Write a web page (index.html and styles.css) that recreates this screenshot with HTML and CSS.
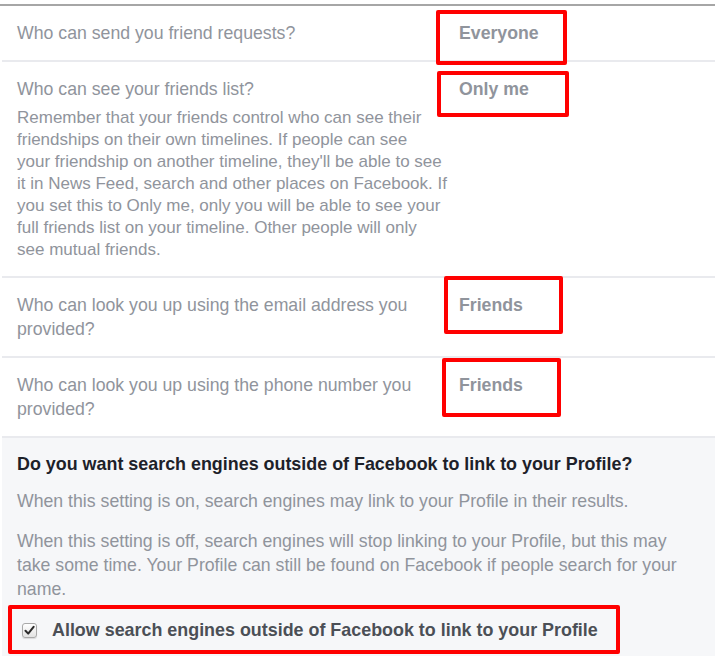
FILE: index.html
```html
<!DOCTYPE html>
<html lang="en">
<head>
    <meta charset="UTF-8">
    <title>Privacy settings</title>
    <link rel="stylesheet" href="styles.css">
</head>
<body>
    <div class="panel">
        <ul class="settings">
            <li class="row">
                <div class="question">Who can send you friend requests?</div>
                <div class="value">Everyone<span class="mark mark-1"></span></div>
            </li>
            <li class="row">
                <div class="question">
                    Who can see your friends list?
                    <p class="hint">Remember that your friends control who can see their<br>
                    friendships on their own timelines. If people can see<br>
                    your friendship on another timeline, they'll be able to see<br>
                    it in News Feed, search and other places on Facebook. If<br>
                    you set this to Only me, only you will be able to see your<br>
                    full friends list on your timeline. Other people will only<br>
                    see mutual friends.</p>
                </div>
                <div class="value">Only me<span class="mark mark-2"></span></div>
            </li>
            <li class="row">
                <div class="question">Who can look you up using the email address you provided?</div>
                <div class="value">Friends<span class="mark mark-3"></span></div>
            </li>
            <li class="row">
                <div class="question">Who can look you up using the phone number you provided?</div>
                <div class="value">Friends<span class="mark mark-4"></span></div>
            </li>
        </ul>
        <div class="search">
            <h3>Do you want search engines outside of Facebook to link to your Profile?</h3>
            <p>When this setting is on, search engines may link to your Profile in their results.</p>
            <p>When this setting is off, search engines will stop linking to your Profile, but this may take some time. Your Profile can still be found on Facebook if people search for your name.</p>
            <label class="allow">
                <span class="check">
                    <svg width="11" height="11" viewBox="0 0 11 11"><path d="M1.5 5.8 L4.2 8.6 L9.6 1.8" fill="none" stroke="#2b2b2b" stroke-width="2" stroke-linecap="round" stroke-linejoin="round"/></svg>
                </span>
                Allow search engines outside of Facebook to link to your Profile
                <span class="mark mark-5"></span>
            </label>
        </div>
    </div>
</body>
</html>
```

FILE: styles.css
```css
body,ul,li,p,h3{
    margin: 0;
    padding: 0;
}
body{
    background: #fff;
    font-family: "Liberation Sans", Arial, sans-serif;
    font-size: 17.7px;
    color: #90949c;
    overflow: hidden;
}
.panel{
    margin-top: 4px;
    border-top: 2px solid #a6a6a6;
    height: 650px;
}
.settings{
    list-style-type: none;
    margin-left: 2px;
}
.row{
    display: grid;
    grid-template-columns: 432px 1fr;
    column-gap: 10px;
    padding: 15px 15px 15px;
    line-height: 24px;
    border-bottom: 2px solid #e9eaee;
}
.hint{
    margin-top: 6px;
    font-size: 17px;
    line-height: 22px;
    white-space: nowrap;
}
.value{
    position: relative;
    font-weight: bold;
    justify-self: start;
}
/* red annotation frames */
.mark{
    position: absolute;
    box-sizing: border-box;
    border: 4px solid #f00;
    border-radius: 2px;
}
.mark-1{ left: -23px; top: -11px; width: 131px; height: 55px; }
.mark-2{ left: -22px; top: -6px; width: 132px; height: 46px; }
.mark-3{ left: -15px; top: -17px; width: 119px; height: 58px; }
.mark-4{ left: -17px; top: -15px; width: 119px; height: 59px; }
.mark-5{ left: -9px; top: -13px; width: 612px; height: 49px; }
.search{
    margin-left: 2px;
    background-color: #f6f7f9;
    padding: 14px 30px 14px 15px;
    line-height: 24px;
    border-bottom: 1px solid #c4c4c4;
}
.search h3{
    font-size: 17.9px;
    color: #1d2129;
}
.search p{
    margin-top: 13px;
}
.search p + p{
    margin-top: 16px;
}
.allow{
    position: relative;
    display: flex;
    align-items: center;
    gap: 15px;
    margin-top: 17px;
    font-size: 17.9px;
    font-weight: bold;
    color: #4b4f56;
}
.check{
    display: flex;
    align-items: center;
    justify-content: center;
    width: 15px;
    height: 15px;
    margin-left: 5px;
    box-sizing: border-box;
    border: 1px solid #a9a9a9;
    border-radius: 3px;
    background: linear-gradient(#ffffff, #e3e3e3);
    box-shadow: 0 1px 1px rgba(0, 0, 0, 0.12);
}
```
